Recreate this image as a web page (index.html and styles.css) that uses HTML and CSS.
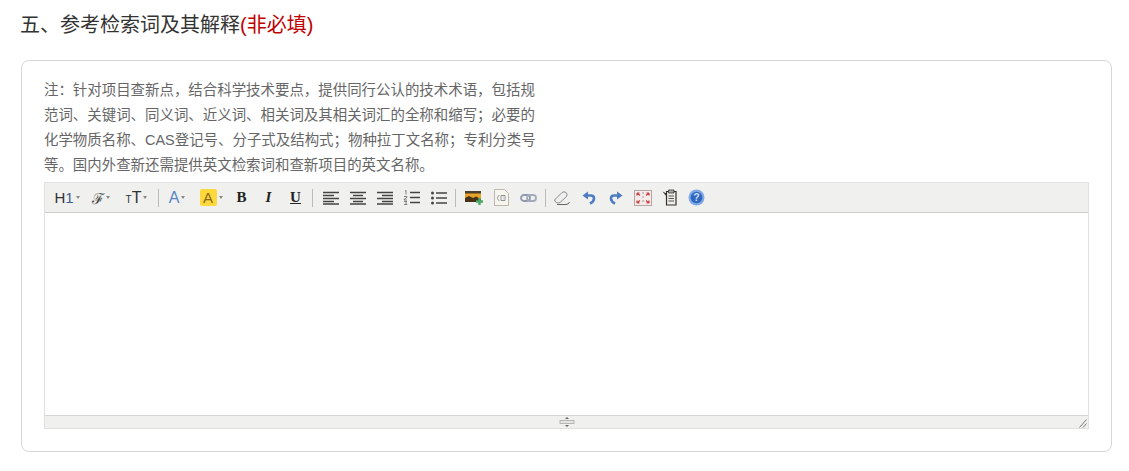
FILE: index.html

```html
<!DOCTYPE html>
<html lang="zh-CN">
<head>
  <meta charset="UTF-8" />
  <title>参考检索词及其解释</title>
  <link rel="stylesheet" href="styles.css">
</head>
<body>
  <h2 class="title">五、参考检索词及其解释<span class="optional">(非必填)</span></h2>

  <div class="card">
    <p class="note">注&#65306;针对项目查新点&#65292;结合科学技术要点&#65292;提供同行公认的技术术语&#65292;包括规<br>范词、关键词、同义词、近义词、相关词及其相关词汇的全称和缩写&#65307;必要的<br>化学物质名称、CAS登记号、分子式及结构式&#65307;物种拉丁文名称&#65307;专利分类号<br>等。国内外查新还需提供英文检索词和查新项目的英文名称。</p>

    <div class="editor">
      <div class="toolbar">
        <span class="btn wide"><span class="h1">H<b>1</b></span><i class="caret"></i></span>
        <span class="btn wide"><span class="ff">ℱ</span><i class="caret"></i></span>
        <span class="btn mid"><span class="fs"><small>T</small>T</span><i class="caret"></i></span>
        <span class="sep sep-first"></span>
        <span class="btn wide"><span class="fc">A</span><i class="caret"></i></span>
        <span class="btn wide"><span class="hl">A</span><i class="caret"></i></span>
        <span class="btn"><span class="bold">B</span></span>
        <span class="btn"><span class="ital">I</span></span>
        <span class="btn"><span class="under">U</span></span>
        <span class="sep sep-second"></span>
        <span class="btn">
          <svg width="18" height="14" viewBox="0 0 18 14"><path d="M1 1.5h16M1 4.5h11M1 7.5h16M1 10.5h11M1 13h16" stroke="#444" stroke-width="1.4"/></svg>
        </span>
        <span class="btn">
          <svg width="18" height="14" viewBox="0 0 18 14"><path d="M1 1.5h16M4 4.5h10M1 7.5h16M4 10.5h10M1 13h16" stroke="#444" stroke-width="1.4"/></svg>
        </span>
        <span class="btn">
          <svg width="18" height="14" viewBox="0 0 18 14"><path d="M1 1.5h16M6 4.5h11M1 7.5h16M6 10.5h11M1 13h16" stroke="#444" stroke-width="1.4"/></svg>
        </span>
        <span class="btn">
          <svg width="18" height="15" viewBox="0 0 18 15"><path d="M7 2.5h10M7 7.5h10M7 12.5h10" stroke="#444" stroke-width="1.5"/><path d="M2 1l1-.5v4M1 6.5h3v.8L1 9.5v.5h3M1 11.5h3l-1.5 1.3L4 14.5H1" fill="none" stroke="#666" stroke-width=".8"/></svg>
        </span>
        <span class="btn">
          <svg width="18" height="14" viewBox="0 0 18 14"><path d="M6 2h11M6 7h11M6 12h11" stroke="#444" stroke-width="1.5"/><circle cx="2.5" cy="2" r="1.5" fill="#444"/><circle cx="2.5" cy="7" r="1.5" fill="#444"/><circle cx="2.5" cy="12" r="1.5" fill="#444"/></svg>
        </span>
        <span class="sep"></span>
        <span class="btn">
          <svg width="19" height="17" viewBox="0 0 19 17"><rect x="0" y="2" width="16" height="11" fill="#e8a32a"/><rect x="0" y="2" width="16" height="2.5" fill="#4a4030"/><path d="M0 13V9l4-2 4 2 3-1.5 5 2.5v3z" fill="#4a3218"/><path d="M14.5 9v7M11 12.5h7" stroke="#4aa868" stroke-width="2.4"/></svg>
        </span>
        <span class="btn">
          <svg width="17" height="17" viewBox="0 0 17 17"><path d="M1.5.5h10l4 4v12h-14z" fill="#f7f5ef" stroke="#bdb8aa"/><path d="M4.5 9q0-2.5 2-2.5M4.5 9q0 2.5 2 2.5" fill="none" stroke="#999" stroke-width=".9"/><path d="M8 6.5h4v5H8z" fill="#fff" stroke="#888" stroke-width=".9"/><path d="M9.5 8h1.5M9.5 10h1.5" stroke="#999" stroke-width=".7"/></svg>
        </span>
        <span class="btn">
          <svg width="17" height="10" viewBox="0 0 17 10"><rect x="1" y="2" width="9" height="6" rx="3" fill="none" stroke="#8f98ae" stroke-width="1.8"/><rect x="7" y="2" width="9" height="6" rx="3" fill="none" stroke="#a3aabc" stroke-width="1.8"/></svg>
        </span>
        <span class="sep sep-last"></span>
        <span class="btn">
          <svg width="18" height="16" viewBox="0 0 18 16"><path d="M1.5 10L9 2.5q2-1.5 4 0t.5 4L7 12.5q-1.5 1-3.5 0t-2-2.5z" fill="#efefef" stroke="#888"/><path d="M4 14.5h9q2.5 0 3.5-2.5" fill="none" stroke="#666" stroke-width="1"/></svg>
        </span>
        <span class="btn">
          <svg width="14" height="14" viewBox="0 0 14 14"><path d="M4.5 4.5H9q3 0 3 3 0 3-4 5" fill="none" stroke="#4d7cc4" stroke-width="2.6"/><path d="M.5 4.5L6 .5v8z" fill="#4d7cc4"/></svg>
        </span>
        <span class="btn">
          <svg width="14" height="14" viewBox="0 0 14 14"><path d="M9.5 4.5H5q-3 0-3 3 0 3 4 5" fill="none" stroke="#4d7cc4" stroke-width="2.6"/><path d="M13.5 4.5L8 .5v8z" fill="#4d7cc4"/></svg>
        </span>
        <span class="btn">
          <svg width="18" height="16" viewBox="0 0 18 16"><rect x=".5" y=".5" width="17" height="15" fill="#f6eaea" stroke="#b5a5a5"/><path d="M3 3l3 2.5M3 3h2.5M3 3v2.5M15 3l-3 2.5M15 3h-2.5M15 3v2.5M3 13l3-2.5M3 13h2.5M3 13v-2.5M15 13l-3-2.5M15 13h-2.5M15 13v-2.5" fill="none" stroke="#c9423e" stroke-width="1.2"/><path d="M9 2v12" stroke="#999" stroke-width="1" stroke-dasharray="2 2"/></svg>
        </span>
        <span class="btn">
          <svg width="16" height="17" viewBox="0 0 16 17"><path d="M4.5 2.5h9.5v13.5H4.5z" fill="#efede6" stroke="#333" stroke-width="1.2"/><path d="M6.5 1h5.5v3H6.5z" fill="#aaa" stroke="#333" stroke-width=".8"/><path d="M6.5 7h5.5M6.5 9.5h5.5M6.5 12h5.5" stroke="#555"/><path d="M.5 2.5l4 2v3z" fill="#333"/></svg>
        </span>
        <span class="btn">
          <svg class="help" width="17" height="17" viewBox="0 0 17 17"><circle cx="8.5" cy="8.5" r="8" fill="#7fa9e6"/><circle cx="8.5" cy="8.5" r="5.8" fill="#2f66bd"/><text x="8.5" y="12.3" text-anchor="middle" class="help-q">?</text></svg>
        </span>
      </div>
      <div class="edit-area"></div>
      <div class="statusbar">
        <svg class="grip" width="16" height="10" viewBox="0 0 16 10"><path d="M8 0l2 2H6zM8 10l2-2H6z" fill="#666"/><rect x="1" y="3.5" width="14" height="3" fill="#e4e4e2" stroke="#aaa" stroke-width=".8"/></svg>
        <svg class="resize" width="8" height="9" viewBox="0 0 8 9"><path d="M.5 8.5L7.5.5M4 8.5l3.5-4" stroke="#777" stroke-width="1"/></svg>
      </div>
    </div>
  </div>
</body>
</html>
```

FILE: styles.css

```css
html, body {
  margin: 0;
  padding: 0;
}
body {
  width: 1129px;
  height: 471px;
  overflow: hidden;
  background-color: #fff;
  font-family: "Liberation Sans", "Noto Sans CJK SC", sans-serif;
  color: #333;
}
.title {
  margin: 0;
  padding: 11px 0 0 20px;
  font-size: 20px;
  line-height: 28px;
  font-weight: normal;
  color: #333;
}
.optional {
  color: #c00000;
}
.card {
  box-sizing: border-box;
  width: 1091px;
  height: 392px;
  margin: 21px 0 0 21px;
  padding: 17px 22px 0;
  border: 1px solid #d8d8d8;
  border-radius: 8px;
}
.note {
  margin: 0 0 4px;
  font-size: 14.45px;
  line-height: 25px;
  color: #666;
  white-space: nowrap;
}
.editor {
  width: 1045px;
  border: 1px solid #e0e0e0;
  box-sizing: border-box;
}
.toolbar {
  display: flex;
  align-items: center;
  height: 30px;
  padding-left: 5px;
  background-color: #f0f0ee;
  border-bottom: 1px solid #ccc;
  box-sizing: border-box;
}
.btn {
  display: flex;
  align-items: center;
  justify-content: center;
  flex: none;
  width: 27px;
  height: 22px;
}
.btn.wide {
  width: 34px;
}
.btn.mid {
  width: 37px;
}
.sep {
  flex: none;
  width: 1px;
  height: 18px;
  margin: 0 5px 0 3px;
  background-color: #bbb;
}
.sep-first {
  margin-right: 1px;
}
.sep-second {
  margin-right: 4px;
}
.sep-last {
  margin-right: 2px;
}
.caret {
  width: 0;
  height: 0;
  margin-left: 2px;
  border-left: 2.5px solid transparent;
  border-right: 2.5px solid transparent;
  border-top: 3px solid #888;
}
.h1 {
  font-size: 15px;
  color: #333;
}
.h1 b {
  font-weight: normal;
  color: #445a90;
}
.ff {
  font-family: "DejaVu Serif", serif;
  font-size: 15px;
  color: #444;
}
.fs {
  font-size: 16px;
  color: #333;
}
.fs small {
  font-size: 10px;
}
.fc {
  font-size: 16px;
  color: #5b87c5;
}
.hl {
  display: block;
  width: 17px;
  height: 17px;
  line-height: 17px;
  text-align: center;
  font-size: 15px;
  color: #8a6c1a;
  background-color: #ffd83c;
  border-radius: 2px;
}
.bold, .ital, .under {
  font-family: "Liberation Serif", serif;
  font-weight: bold;
  font-size: 15px;
  color: #222;
}
.ital {
  font-style: italic;
}
.under {
  text-decoration: underline;
}
.help-q {
  font-family: "Liberation Sans", sans-serif;
  font-size: 10.5px;
  font-weight: bold;
  fill: #cfe0f8;
}
.edit-area {
  height: 202px;
  background-color: #fff;
}
.statusbar {
  display: flex;
  align-items: center;
  justify-content: center;
  position: relative;
  height: 13px;
  background-color: #f0f0ee;
  border-top: 1px solid #d4d4d4;
  box-sizing: border-box;
}
.resize {
  position: absolute;
  right: 1px;
  bottom: 0;
}
```
